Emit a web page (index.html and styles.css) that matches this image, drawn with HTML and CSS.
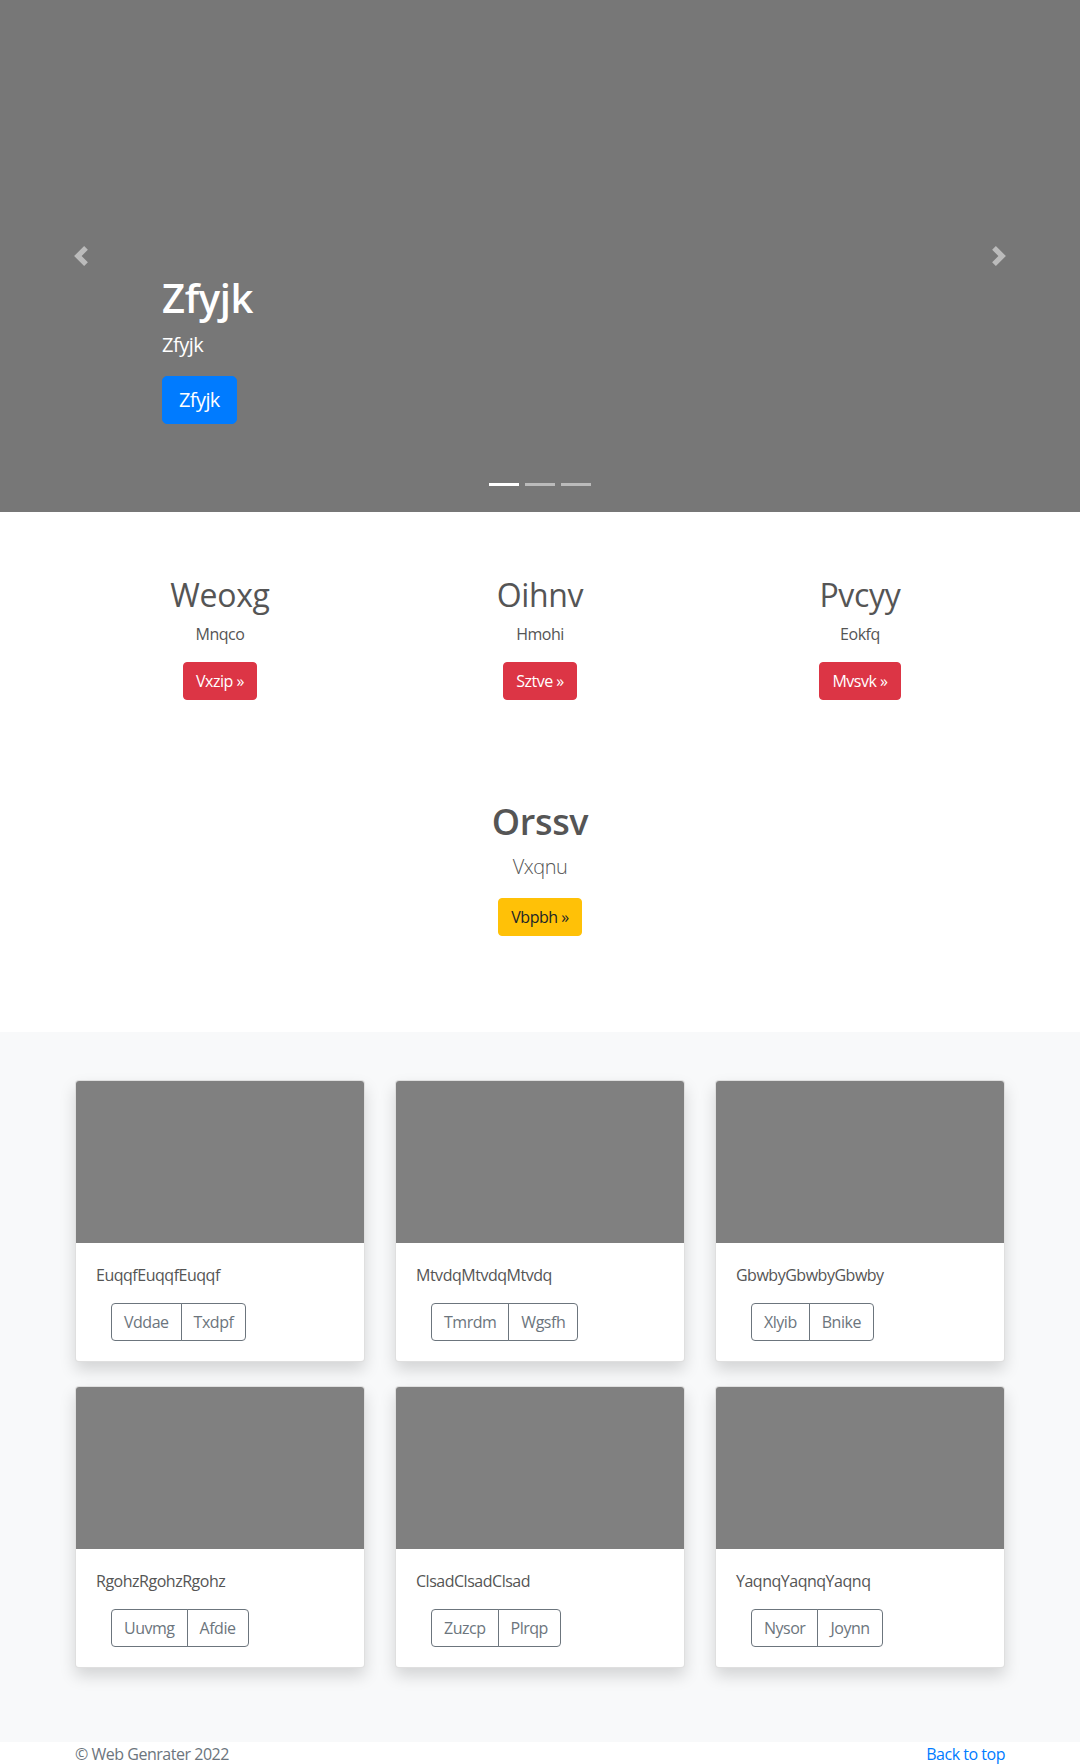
FILE: index.html
```html
<!DOCTYPE html>
<html lang="en">

<head>
    <meta charset="UTF-8">
    <meta name="viewport" content="width=device-width, initial-scale=1.0">
    <title>Web Genrater</title>
    <link rel="stylesheet" href="styles.css">
</head>

<body>
    <main>
        <div class="carousel" id="top">
            <div class="carousel-caption">
                <h1>Zfyjk</h1>
                <p class="caption-text">Zfyjk</p>
                <p class="caption-action"><a class="btn btn-lg btn-primary" href="#">Zfyjk</a></p>
            </div>

            <ol class="carousel-indicators">
                <li class="active"></li>
                <li></li>
                <li></li>
            </ol>

            <a class="carousel-control prev" href="#">
                <svg width="20" height="20" viewBox="0 0 8 8" fill="#fff"><path d="M5.25 0l-4 4 4 4 1.5-1.5L4.25 4l2.5-2.5L5.25 0z"/></svg>
            </a>
            <a class="carousel-control next" href="#">
                <svg width="20" height="20" viewBox="0 0 8 8" fill="#fff"><path d="M2.75 0l-1.5 1.5L3.75 4l-2.5 2.5L2.75 8l4-4-4-4z"/></svg>
            </a>
        </div>

        <div class="container marketing">
            <div class="row">
                <div class="col">
                    <h2>Weoxg</h2>
                    <p>Mnqco</p>
                    <p class="btn-row"><a class="btn btn-danger" href="#">Vxzip &raquo;</a></p>
                </div>
                <div class="col">
                    <h2>Oihnv</h2>
                    <p>Hmohi</p>
                    <p class="btn-row"><a class="btn btn-danger" href="#">Sztve &raquo;</a></p>
                </div>
                <div class="col">
                    <h2>Pvcyy</h2>
                    <p>Eokfq</p>
                    <p class="btn-row"><a class="btn btn-danger" href="#">Mvsvk &raquo;</a></p>
                </div>
            </div>
        </div>

        <div class="container feature">
            <h2>Orssv</h2>
            <p class="lead">Vxqnu</p>
            <p class="btn-row"><a class="btn btn-warning" href="#">Vbpbh &raquo;</a></p>
        </div>

        <div class="album">
            <div class="container">
                <div class="row">
                    <div class="col">
                        <div class="card">
                            <div class="card-img"></div>
                            <div class="card-body">
                                <p class="card-text">EuqqfEuqqfEuqqf</p>
                                <div class="btn-group">
                                    <button type="button" class="btn btn-outline">Vddae</button>
                                    <button type="button" class="btn btn-outline">Txdpf</button>
                                </div>
                            </div>
                        </div>
                    </div>
                    <div class="col">
                        <div class="card">
                            <div class="card-img"></div>
                            <div class="card-body">
                                <p class="card-text">MtvdqMtvdqMtvdq</p>
                                <div class="btn-group">
                                    <button type="button" class="btn btn-outline">Tmrdm</button>
                                    <button type="button" class="btn btn-outline">Wgsfh</button>
                                </div>
                            </div>
                        </div>
                    </div>
                    <div class="col">
                        <div class="card">
                            <div class="card-img"></div>
                            <div class="card-body">
                                <p class="card-text">GbwbyGbwbyGbwby</p>
                                <div class="btn-group">
                                    <button type="button" class="btn btn-outline">Xlyib</button>
                                    <button type="button" class="btn btn-outline">Bnike</button>
                                </div>
                            </div>
                        </div>
                    </div>
                    <div class="col">
                        <div class="card">
                            <div class="card-img"></div>
                            <div class="card-body">
                                <p class="card-text">RgohzRgohzRgohz</p>
                                <div class="btn-group">
                                    <button type="button" class="btn btn-outline">Uuvmg</button>
                                    <button type="button" class="btn btn-outline">Afdie</button>
                                </div>
                            </div>
                        </div>
                    </div>
                    <div class="col">
                        <div class="card">
                            <div class="card-img"></div>
                            <div class="card-body">
                                <p class="card-text">ClsadClsadClsad</p>
                                <div class="btn-group">
                                    <button type="button" class="btn btn-outline">Zuzcp</button>
                                    <button type="button" class="btn btn-outline">Plrqp</button>
                                </div>
                            </div>
                        </div>
                    </div>
                    <div class="col">
                        <div class="card">
                            <div class="card-img"></div>
                            <div class="card-body">
                                <p class="card-text">YaqnqYaqnqYaqnq</p>
                                <div class="btn-group">
                                    <button type="button" class="btn btn-outline">Nysor</button>
                                    <button type="button" class="btn btn-outline">Joynn</button>
                                </div>
                            </div>
                        </div>
                    </div>
                </div>
            </div>
        </div>
    </main>

    <footer class="footer">
        <div class="container footer-inner">
            <p>&copy; Web Genrater 2022</p>
            <p><a href="#top">Back to top</a></p>
        </div>
    </footer>
</body>

</html>
```

FILE: styles.css
```css
* {
    box-sizing: border-box;
}

body {
    font-family: "Open Sans", "Noto Sans", sans-serif;
    font-size: 16px;
    line-height: 1.5;
    letter-spacing: -0.03em;
    color: #555;
    background-color: #fff;
    margin: 0;
    padding: 0;
}

h1,
h2,
p {
    margin: 0;
}

h1,
h2 {
    letter-spacing: -0.01em;
}

a {
    color: #007bff;
    text-decoration: none;
}

.container {
    width: 960px;
    margin: 0 auto;
    padding: 0 15px;
}

.row {
    display: flex;
    flex-wrap: wrap;
    margin: 0 -15px;
}

.col {
    width: 33.3333%;
    padding: 0 15px;
}

/* buttons */
.btn {
    display: inline-block;
    font-family: inherit;
    font-size: 16px;
    line-height: 1.5;
    letter-spacing: -0.03em;
    padding: 6px 12px;
    border: 1px solid transparent;
    border-radius: 4px;
    background: none;
    cursor: pointer;
}

.btn-lg {
    font-size: 20px;
    padding: 8px 16px;
    border-radius: 5px;
}

.btn-primary {
    background-color: #007bff;
    border-color: #007bff;
    color: #fff;
}

.btn-danger {
    background-color: #dc3545;
    border-color: #dc3545;
    color: #fff;
}

.btn-warning {
    background-color: #ffc107;
    border-color: #ffc107;
    color: #212529;
}

.btn-outline {
    border-color: #6c757d;
    color: #6c757d;
}

.btn-row {
    display: flex;
    justify-content: center;
}

/* carousel */
.carousel {
    position: relative;
    height: 512px;
    background-color: #777;
    margin-bottom: 64px;
}

.carousel-caption {
    position: absolute;
    left: 15%;
    right: 15%;
    bottom: 48px;
    padding: 20px 0;
    color: #fff;
}

.carousel-caption h1 {
    font-size: 40px;
    font-weight: 600;
    line-height: 1.2;
    margin-bottom: 8px;
}

.caption-text {
    font-size: 20px;
    margin-bottom: 16px;
}

.caption-action {
    display: flex;
    margin-bottom: 20px;
}

.carousel-indicators {
    position: absolute;
    left: 0;
    right: 0;
    bottom: 26px;
    display: flex;
    justify-content: center;
    gap: 6px;
    list-style: none;
    margin: 0;
    padding: 0;
}

.carousel-indicators li {
    width: 30px;
    height: 3px;
    background-color: #fff;
    opacity: .5;
}

.carousel-indicators li.active {
    opacity: 1;
}

.carousel-control {
    position: absolute;
    top: 0;
    bottom: 0;
    width: 15%;
    display: flex;
    align-items: center;
    justify-content: center;
    opacity: .5;
}

.carousel-control.prev {
    left: 0;
}

.carousel-control.next {
    right: 0;
}

/* marketing */
.marketing .col {
    text-align: center;
    margin-bottom: 24px;
}

.marketing h2 {
    font-size: 32px;
    font-weight: 500;
    line-height: 1.2;
    margin-bottom: 8px;
}

.marketing p {
    margin: 0 12px 16px;
}

.feature {
    text-align: center;
    padding-top: 60px;
    padding-bottom: 96px;
}

.feature h2 {
    font-size: 36px;
    font-weight: 600;
    line-height: 1.2;
    margin-bottom: 8px;
}

.lead {
    font-size: 20px;
    font-weight: 300;
    margin-bottom: 16px;
}

/* album */
.album {
    background-color: #f8f9fa;
    padding: 48px 0 50px;
}

.card {
    background-color: #fff;
    border: 1px solid rgba(0, 0, 0, 0.125);
    border-radius: 4px;
    box-shadow: 0 8px 16px rgba(0, 0, 0, 0.15);
    margin-bottom: 24px;
    overflow: hidden;
}

.card-img {
    height: 162px;
    background-color: #808080;
}

.card-body {
    padding: 20px;
}

.card-text {
    margin-bottom: 16px;
}

.btn-group {
    display: inline-flex;
    margin-left: 15px;
}

.btn-group .btn {
    border-radius: 0;
}

.btn-group .btn:first-child {
    border-radius: 4px 0 0 4px;
}

.btn-group .btn:last-child {
    border-radius: 0 4px 4px 0;
    margin-left: -1px;
}

/* footer */
.footer {
    color: #6c757d;
    padding-bottom: 48px;
}

.footer-inner {
    display: flex;
    justify-content: space-between;
}
```
